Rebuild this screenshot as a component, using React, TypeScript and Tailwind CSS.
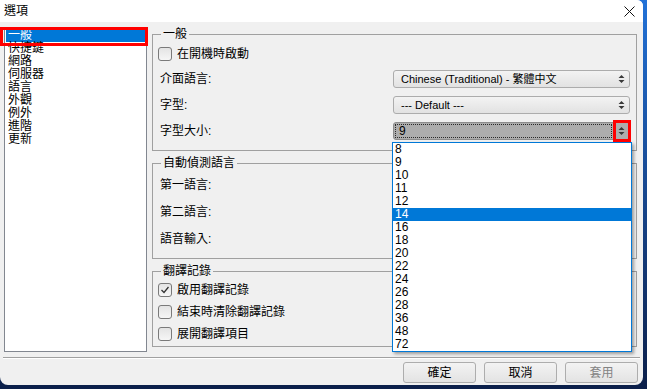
import React from 'react'

const SIZES = ['8', '9', '10', '11', '12', '14', '16', '18', '20', '22', '24', '26', '28', '36', '48', '72']
const PAGES = ['一般', '快捷鍵', '網路', '伺服器', '語言', '外觀', '例外', '進階', '更新']

function Arrows() {
  return (
    <svg width="7" height="10" viewBox="0 0 7 10" className="shrink-0">
      <path d="M3.5 1 L6.5 4 H0.5 Z M0.5 6 H6.5 L3.5 9 Z" fill="#3a3a3a" />
    </svg>
  )
}

function Combo({ value, pressed }: { value?: string; pressed?: boolean }) {
  if (pressed) {
    return (
      <div className="h-[18px] w-[237px] rounded-[3px] border border-[#8c8c8c] bg-[#adadad] flex items-center">
        <div className="ml-[1px] h-[14px] w-[217px] border border-dotted border-[#2a2a2a] flex items-center pl-[3px]">{value}</div>
        <div className="ml-auto mr-[4px]"><Arrows /></div>
      </div>
    )
  }
  return (
    <div className="h-[18px] w-[237px] rounded-[3px] border border-[#acacac] bg-linear-to-b from-[#f3f3f3] to-[#e2e2e2] flex items-center pl-[7px]">
      <span className="whitespace-nowrap text-[11px]">{value}</span>
      <div className="ml-auto mr-[4px]"><Arrows /></div>
    </div>
  )
}

function Check({ label, checked }: { label: string; checked?: boolean }) {
  return (
    <div className="h-[14px] flex items-center gap-[5px]">
      <div className="w-[14px] h-[14px] rounded-[3px] border border-[#7a7a7a] bg-linear-to-b from-[#e4e4e4] to-[#f6f6f6] flex items-center justify-center">
        {checked && (
          <svg width="10" height="10" viewBox="0 0 10 10">
            <path d="M1.5 5 L4 7.5 L8.5 2" stroke="#333" strokeWidth="1.3" fill="none" />
          </svg>
        )}
      </div>
      <span>{label}</span>
    </div>
  )
}

function Row({ label, value, pressed }: { label: string; value?: string; pressed?: boolean }) {
  return (
    <div className="h-[18px] flex items-center pl-[2px]">
      <span>{label}</span>
      <div className="ml-auto"><Combo value={value} pressed={pressed} /></div>
    </div>
  )
}

export default function App() {
  return (
    <div className="relative w-[647px] h-[389px] overflow-hidden bg-linear-to-b from-[#2272d8] to-[#0b1f4a] text-[12px] leading-[14px] text-black font-['Liberation_Sans','Noto_Sans_CJK_TC',sans-serif]">
      <div className="w-[643px] h-[385px] bg-[#f0f0f0] rounded-tr-[6px] rounded-b-[8px] overflow-hidden flex flex-col">
        {/* title bar */}
        <div className="h-[22px] bg-white flex items-center justify-between pl-[4px] pr-[8px]">
          <span>選項</span>
          <svg width="11" height="11" viewBox="0 0 11 11">
            <path d="M0.5 0.5 L10.5 10.5 M10.5 0.5 L0.5 10.5" stroke="#111" strokeWidth="1" />
          </svg>
        </div>

        <div className="flex pl-[4px] mt-[5px] gap-[5px]">
          {/* page list */}
          <div className="w-[143px] h-[325px] border border-[#828790] bg-white pt-[1px] px-[1px]">
            {PAGES.map((p, i) => (
              <div key={p} className={`h-[13px] leading-[13px] pl-[2px] ${i === 0 ? 'bg-[#0078d7] text-white' : ''}`}>{p}</div>
            ))}
          </div>

          {/* settings */}
          <div className="w-[485px] flex flex-col gap-[5px]">
            <fieldset className="border border-[#a0a0a0] p-0 m-0">
              <legend className="ml-[8px] px-[2px] h-[14px]">一般</legend>
              <div className="pl-[5px] pr-[6px] pt-[6px] pb-[10px] flex flex-col">
                <Check label="在開機時啟動" />
                <div className="mt-[9px] flex flex-col gap-[8px]">
                  <Row label="介面語言:" value="Chinese (Traditional) - 繁體中文" />
                  <Row label="字型:" value="--- Default ---" />
                  <Row label="字型大小:" value="9" pressed />
                </div>
              </div>
            </fieldset>

            <fieldset className="border border-[#a0a0a0] p-0 m-0">
              <legend className="ml-[8px] px-[2px] h-[14px]">自動偵測語言</legend>
              <div className="pl-[5px] pr-[6px] pt-[6px] pb-[10px] flex flex-col gap-[9px]">
                <Row label="第一語言:" value="" />
                <Row label="第二語言:" value="" />
                <Row label="語音輸入:" value="" />
              </div>
            </fieldset>

            <fieldset className="border border-[#a0a0a0] p-0 m-0">
              <legend className="ml-[8px] px-[2px] h-[14px]">翻譯記錄</legend>
              <div className="pl-[5px] pr-[6px] pt-[5px] pb-[5px] flex flex-col gap-[8px]">
                <Check label="啟用翻譯記錄" checked />
                <Check label="結束時清除翻譯記錄" />
                <Check label="展開翻譯項目" />
              </div>
            </fieldset>
          </div>
        </div>

        {/* separator */}
        <div className="ml-[3px] mt-[5px] w-[637px] h-[2px] border-t border-[#a0a0a0] border-b border-b-white" />

        {/* buttons */}
        <div className="mt-[3px] flex justify-end gap-[8px] pr-[5px]">
          {['確定', '取消', '套用'].map((b) => (
            <div
              key={b}
              className={`w-[73px] h-[21px] rounded-[3px] border border-[#adadad] bg-linear-to-b from-[#f3f3f3] to-[#e3e3e3] flex items-center justify-center ${b === '套用' ? 'text-[#838383]' : ''}`}
            >
              {b}
            </div>
          ))}
        </div>
      </div>

      {/* highlight on selected page */}
      <div className="absolute left-0 top-[27px] w-[148px] h-[19px] border-[3px] border-[#ff0000]" />

      {/* open font size list */}
      <div className="absolute left-[392px] top-[142px] w-[240px] h-[210px] border border-[#0078d7] bg-white shadow-[2px_2px_3px_rgba(0,0,0,0.35)]">
        {SIZES.map((s) => (
          <div key={s} className={`h-[13px] leading-[13px] pl-[2px] ${s === '14' ? 'bg-[#0078d7] text-white' : ''}`}>{s}</div>
        ))}
      </div>

      {/* highlight on combo arrow */}
      <div className="absolute left-[613px] top-[120px] w-[18px] h-[22px] border-[3px] border-[#ff0000]" />
    </div>
  )
}
